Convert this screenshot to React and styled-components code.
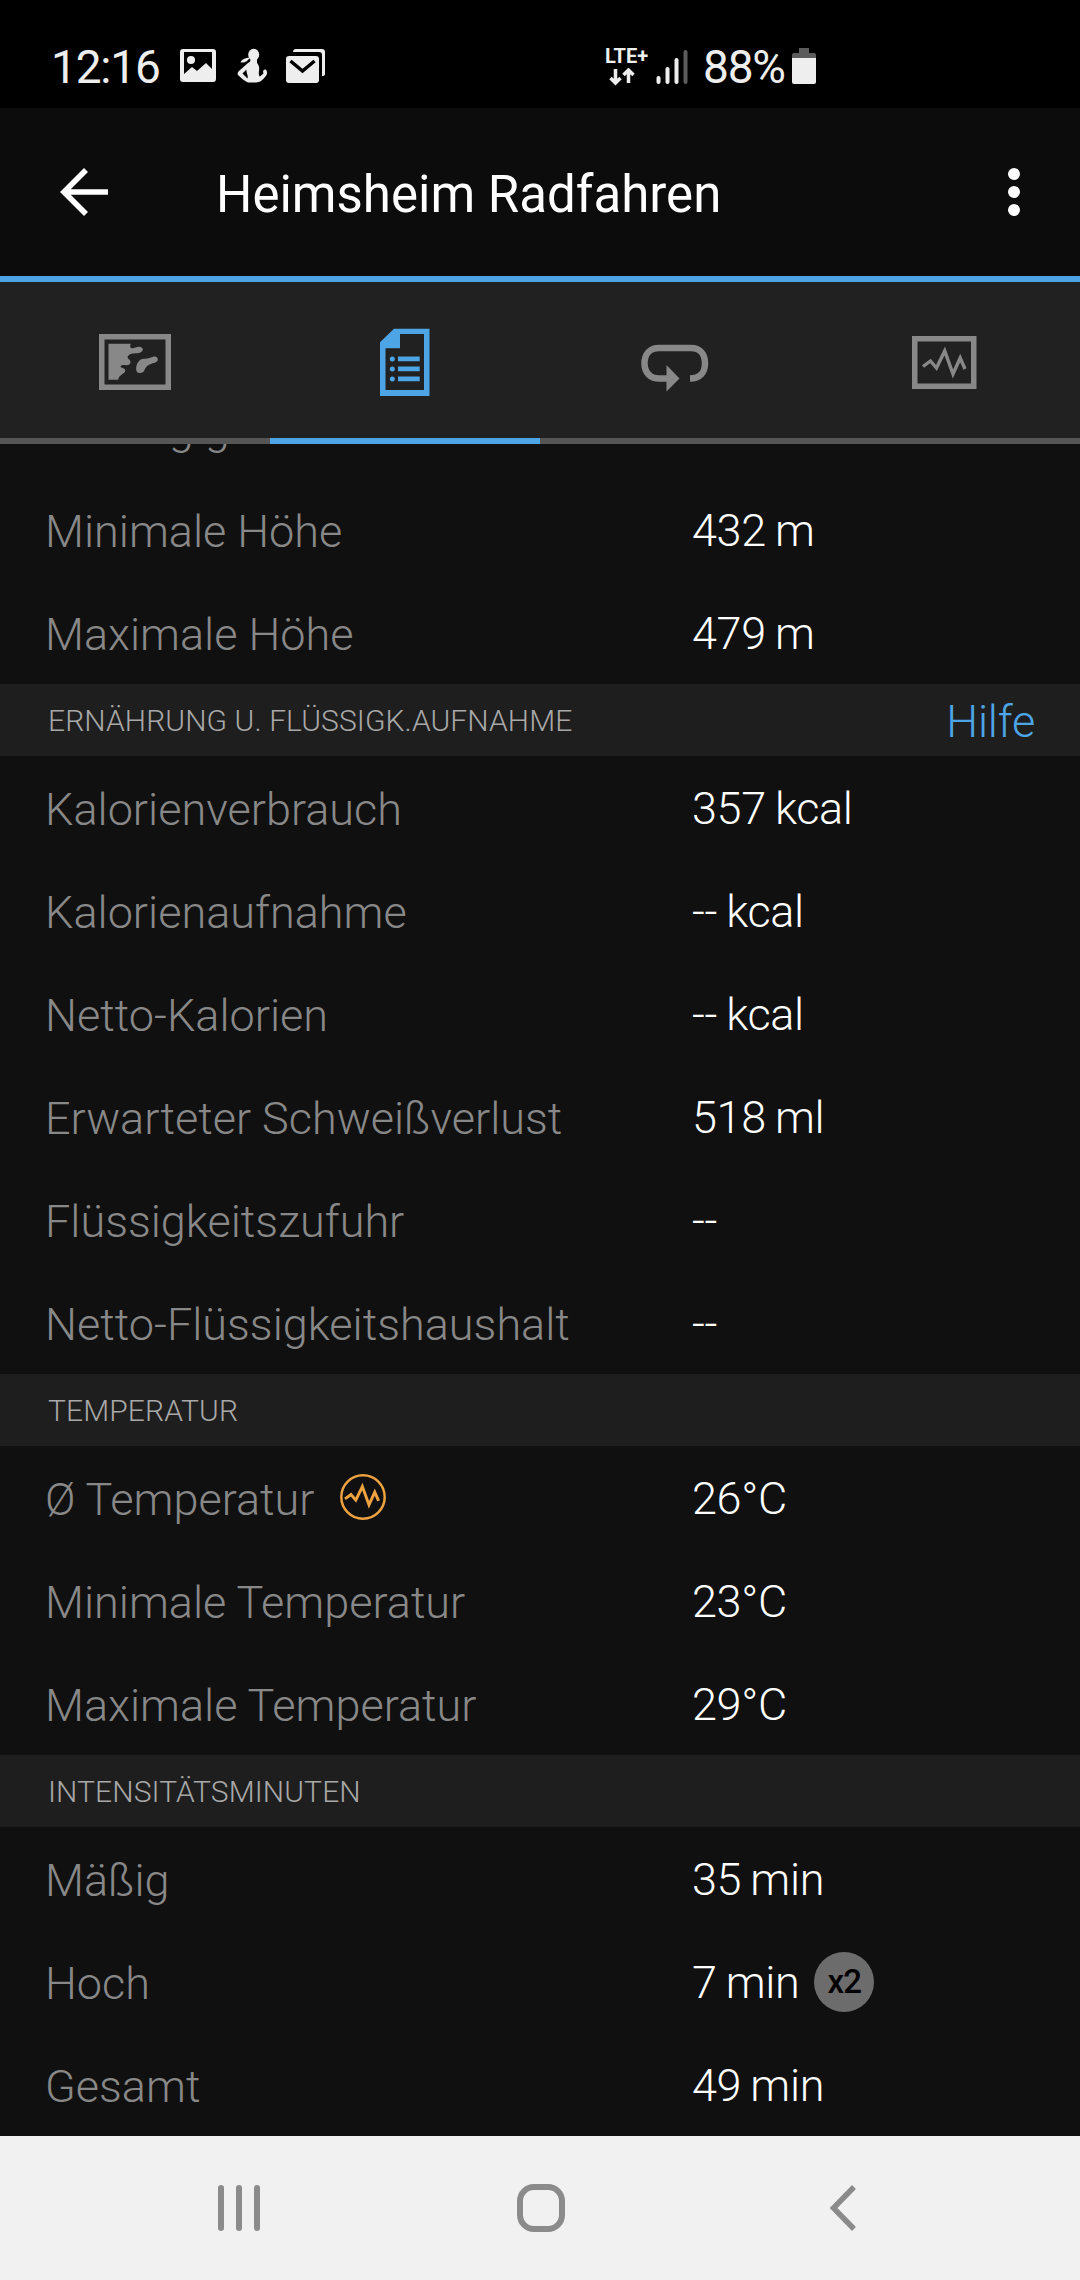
import styled, { createGlobalStyle } from "styled-components";

const GlobalStyle = createGlobalStyle`
  * {
    box-sizing: border-box;
  }

  body {
    margin: 0;
    background: #101010;
    font-family: Roboto, "Noto Sans", sans-serif;
  }
`;

const Screen = styled.div`
  width: 1080px;
  height: 2280px;
  display: flex;
  flex-direction: column;
  background: #101010;
  overflow: hidden;
`;

const StatusBar = styled.div`
  flex: none;
  height: 108px;
  display: flex;
  align-items: flex-start;
  justify-content: space-between;
  padding: 43px 264px 0 51px;
  background: #000000;
  color: #eeeeee;
`;

const StatusGroup = styled.div`
  display: flex;
  align-items: flex-start;
`;

const StatusText = styled.span`
  width: ${({ $width }) => $width}px;
  margin-left: ${({ $gap }) => $gap || 0}px;
  font-size: 46px;
  line-height: 48px;
  letter-spacing: -1.2px;
  white-space: nowrap;
`;

const StatusIcon = styled.svg`
  display: block;
  flex: none;
  margin-left: ${({ $gap }) => $gap || 0}px;
`;

const Network = styled.div`
  width: 46px;
  display: flex;
  flex-direction: column;
  gap: 2px;
  padding-top: 3px;
  font-size: 20px;
  font-weight: 700;
  line-height: 20px;
`;

const AppBar = styled.header`
  flex: none;
  height: 174px;
  display: flex;
  align-items: center;
  padding: 0 54px 0 60px;
  background: #0c0c0c;
  border-bottom: 6px solid #4ea5e6;
`;

const Title = styled.h1`
  flex: 1;
  margin: 4px 0 0 108px;
  font-size: 51px;
  font-weight: 400;
  color: #ffffff;
`;

const Tabs = styled.nav`
  flex: none;
  height: 162px;
  display: flex;
`;

const Tab = styled.button`
  flex: 1;
  display: flex;
  align-items: flex-start;
  justify-content: center;
  padding: ${({ $top }) => $top}px 0 0;
  border: 0;
  border-bottom: 6px solid ${({ $active }) => ($active ? "#4ea5e6" : "#555555")};
  background: #212121;
  color: ${({ $active }) => ($active ? "#4ea5e6" : "#888888")};

  svg {
    display: block;
  }
`;

const Content = styled.main`
  flex: 1;
  min-height: 0;
  display: flex;
  flex-direction: column;
  justify-content: flex-end;
  overflow: hidden;
`;

const Row = styled.div`
  flex: none;
  height: 103px;
  display: grid;
  grid-template-columns: 647px 1fr;
  align-items: center;
  padding-left: 45px;
  font-size: 45px;
  font-weight: 300;
  line-height: 54px;
`;

const Label = styled.span`
  display: flex;
  align-items: center;
  gap: 26px;
  padding-top: 5px;
  color: #888888;

  svg {
    margin-top: -6px;
  }
`;

const Value = styled.span`
  display: flex;
  align-items: center;
  gap: 15px;
  padding-top: 2px;
  color: #ffffff;
  letter-spacing: -0.35px;
  word-spacing: -1.5px;
`;

const SectionHeader = styled.h2`
  flex: none;
  height: 72px;
  display: flex;
  align-items: center;
  justify-content: space-between;
  margin: 0;
  padding: 0 45px 0 48px;
  background: #1e1e1e;
  color: #a8a8a8;
  font-size: 30px;
  font-weight: 300;
  letter-spacing: 0.1px;
  text-transform: uppercase;
`;

const HelpLink = styled.a`
  margin-top: 2px;
  color: #4ea5e6;
  font-size: 45px;
  letter-spacing: -0.2px;
  text-transform: none;
`;

const Multiplier = styled.span`
  width: 60px;
  height: 60px;
  display: flex;
  align-items: center;
  justify-content: center;
  margin-top: -2px;
  border-radius: 50%;
  background: #6c6c6c;
  color: #000000;
  font-size: 33px;
  font-weight: 500;
  letter-spacing: -0.7px;
`;

const NavBar = styled.footer`
  flex: none;
  height: 144px;
  display: grid;
  grid-template-columns: repeat(3, 302px);
  align-items: center;
  justify-items: center;
  padding-left: 88px;
  background: #f1f1f1;
`;

const Pulse = ({ width }) => (
  <polyline
    points="0,20.500 7.500,15 13.500,22 21.700,5 30,28 37.200,12 42,23"
    fill="none"
    stroke="currentColor"
    strokeWidth={width}
  />
);

const MapIcon = () => (
  <svg width="72" height="56" viewBox="0 0 72 56" fill="currentColor">
    <path fillRule="evenodd" d="M0 0H72V56H0ZM5.500 5.500V50.500H66.500V5.500Z" />
    <path d="M9.500 9.700H32C30.500 12 31 14.500 34 14.200C36.500 13.800 37 13 40 12.800C44.500 13 45 17 41.500 18.500C37 20 33 18.500 30 21C26 24.500 31.500 24.500 31.500 28C31.500 31.500 28 31.300 25 31C21.500 31 20 33 23.500 34C28 35 26.500 38.500 23.500 40C20.500 42 19.500 43.500 19.200 45.700H9.500Z" />
    <path d="M54 22.700C59.500 21.500 60.500 27.500 56 28.700C50 30 47 32 45.500 36C44.500 40 38 40 37.300 36.500C36.500 31 39.500 26 43 25C47 24.500 50 24.500 54 22.700Z" />
  </svg>
);

const DetailsIcon = () => (
  <svg width="50" height="68" viewBox="0 0 50 68" fill="currentColor">
    <path fillRule="evenodd" d="M14 .7H49.500V68H0V14.300ZM20 6V20.300H5.500V62H44V6Z" />
    <circle cx="12.300" cy="31" r="2.500" />
    <circle cx="12.300" cy="41" r="2.500" />
    <circle cx="12.300" cy="51" r="2.500" />
    <path d="M18 28.500H39.700V33.300H18ZM18 38.500H39.700V43.300H18ZM18 48.500H39.700V53.300H18Z" />
  </svg>
);

const LapsIcon = () => (
  <svg width="68" height="48" viewBox="0 0 68 48">
    <path
      d="M49 34.500C59 34.500 64 28 64 19.500C64 10 59 4 50 4H18C9 4 3.500 10 3.500 19.500C3.500 28 9 34.500 18 34.500H28"
      fill="none"
      stroke="currentColor"
      strokeWidth="6.500"
    />
    <path d="M25.500 21L38.500 34.500L25.500 47.500Z" fill="currentColor" />
  </svg>
);

const ChartIcon = () => (
  <svg width="66" height="54" viewBox="0 0 66 54">
    <rect x="2.750" y="2.750" width="59" height="47.500" fill="none" stroke="currentColor" strokeWidth="5.500" />
    <g transform="translate(11 10)">
      <Pulse width={3.4} />
    </g>
  </svg>
);

const TemperatureChart = () => (
  <svg width="46" height="46" viewBox="0 0 46 46" color="#eda13f">
    <circle cx="23" cy="23" r="21.700" fill="none" stroke="currentColor" strokeWidth="2.500" />
    <g transform="translate(5 8.500) scale(.8)">
      <Pulse width={3.7} />
    </g>
  </svg>
);

const DataRow = ({ label, value, chart, multiplier }) => (
  <Row>
    <Label>
      {label}
      {chart && <TemperatureChart />}
    </Label>
    <Value>
      {value}
      {multiplier && <Multiplier>{multiplier}</Multiplier>}
    </Value>
  </Row>
);

const tabs = [
  { id: "map", icon: <MapIcon />, top: 52 },
  { id: "details", icon: <DetailsIcon />, top: 46, active: true },
  { id: "laps", icon: <LapsIcon />, top: 62 },
  { id: "charts", icon: <ChartIcon />, top: 54 },
];

const sections = [
  {
    id: "elevation",
    rows: [
      { label: "Abstieg gesamt", value: "" },
      { label: "Minimale Höhe", value: "432 m" },
      { label: "Maximale Höhe", value: "479 m" },
    ],
  },
  {
    id: "nutrition",
    title: "Ernährung u. Flüssigk.aufnahme",
    help: "Hilfe",
    rows: [
      { label: "Kalorienverbrauch", value: "357 kcal" },
      { label: "Kalorienaufnahme", value: "-- kcal" },
      { label: "Netto-Kalorien", value: "-- kcal" },
      { label: "Erwarteter Schweißverlust", value: "518 ml" },
      { label: "Flüssigkeitszufuhr", value: "--" },
      { label: "Netto-Flüssigkeitshaushalt", value: "--" },
    ],
  },
  {
    id: "temperature",
    title: "Temperatur",
    rows: [
      { label: "Ø Temperatur", value: "26°C", chart: true },
      { label: "Minimale Temperatur", value: "23°C" },
      { label: "Maximale Temperatur", value: "29°C" },
    ],
  },
  {
    id: "intensity",
    title: "Intensitätsminuten",
    rows: [
      { label: "Mäßig", value: "35 min" },
      { label: "Hoch", value: "7 min", multiplier: "x2" },
      { label: "Gesamt", value: "49 min" },
    ],
  },
];

const Section = ({ title, help, rows }) => (
  <>
    {title && (
      <SectionHeader>
        {title}
        {help && <HelpLink>{help}</HelpLink>}
      </SectionHeader>
    )}
    {rows.map((row) => (
      <DataRow key={row.label} {...row} />
    ))}
  </>
);

const App = () => {
  return (
    <Screen>
      <GlobalStyle />
      <StatusBar>
        <StatusGroup>
          <StatusText $width={129}>12:16</StatusText>
          <StatusIcon width="36" height="48" viewBox="0 0 36 48" fill="#eeeeee">
            <path fillRule="evenodd" d="M3 6H33Q36 6 36 9V36Q36 39 33 39H3Q0 39 0 36V9Q0 6 3 6ZM4 9V31L12 24L17 28L26 20L32 26V9Z" />
            <circle cx="11" cy="17" r="4" />
          </StatusIcon>
          {/* runner with ponytail */}
          <StatusIcon $gap={21} width="31" height="48" viewBox="0 0 31 48" fill="#eeeeee">
            <ellipse cx="16.700" cy="11.800" rx="5.500" ry="6" />
            <path d="M3.500 19.500C5 16 8 15 13 14.500C11 18 8 20 3.500 19.500Z" />
            <path
              fillRule="evenodd"
              d="M13.500 16H20V20C22 22 22.500 25 22 28C21.500 31 22 33 23 33.500L26.500 30.500C25.500 28 26.500 26 29 26.500C30.500 29 30.500 31 28.500 33.500C26 36.500 23 39.500 19 39.500H11C8 38.500 4 35 1 32C0 30.500 1 29 2.500 27.500L11 20C13 19 13.500 18 13.500 16ZM9.500 26.500L5.500 30.500L10.500 35.500C11.500 32 9 30 9.500 26.500Z"
            />
          </StatusIcon>
          <StatusIcon $gap={18} width="40" height="48" viewBox="0 0 40 48" fill="#eeeeee">
            <path d="M7 9Q7 6 10 6H36Q39 6 39 9V31Q39 33 36 33V12Q36 9 33 9Z" />
            <rect y="13" width="33" height="27" rx="3" />
            <path d="M4.500 18L16.500 28L28.500 18" fill="none" stroke="#000000" strokeWidth="3.500" />
          </StatusIcon>
        </StatusGroup>
        <StatusGroup>
          <Network>
            LTE+
            <svg width="30" height="18" viewBox="0 0 30 18" stroke="#eeeeee" strokeWidth="3.500" fill="none">
              <path d="M10.500 1V15M5.500 10L10.500 15L15.500 10M23.500 15V2M18.500 7L23.500 2L28.500 7" />
            </svg>
          </Network>
          <StatusIcon $gap={5} width="32" height="48" viewBox="0 0 32 48" fill="#eeeeee">
            <rect x=".5" y="33" width="4" height="8" rx="2" />
            <rect x="9.500" y="24" width="4" height="17" rx="2" />
            <rect x="18.500" y="15" width="4" height="26" rx="2" />
            <rect x="27.500" y="7" width="4" height="34" rx="2" fill="#5c5c5c" />
          </StatusIcon>
          <StatusText $width={89} $gap={15}>
            88%
          </StatusText>
          <StatusIcon width="24" height="48" viewBox="0 0 24 48" fill="#eeeeee">
            <path d="M7 5H17V10H22Q24 10 24 12V16H0V12Q0 10 2 10H7Z" fill="#5c5c5c" />
            <path d="M0 15H24V39Q24 41 22 41H2Q0 41 0 39Z" />
          </StatusIcon>
        </StatusGroup>
      </StatusBar>
      <AppBar>
        <svg width="48" height="48" viewBox="0 0 48 48" fill="none" stroke="#ffffff" strokeWidth="5.600">
          <path d="M26 2L4 24L26 46M4 24H48" />
        </svg>
        <Title>Heimsheim Radfahren</Title>
        <svg width="24" height="48" viewBox="0 0 24 48" fill="#ffffff">
          <circle cx="12" cy="6" r="6" />
          <circle cx="12" cy="24" r="6" />
          <circle cx="12" cy="42" r="6" />
        </svg>
      </AppBar>
      <Tabs>
        {tabs.map(({ id, icon, top, active }) => (
          <Tab key={id} aria-label={id} $top={top} $active={active}>
            {icon}
          </Tab>
        ))}
      </Tabs>
      <Content>
        {sections.map((section) => (
          <Section key={section.id} {...section} />
        ))}
      </Content>
      <NavBar>
        <svg width="42" height="46" viewBox="0 0 42 46" fill="#8b8b8b">
          <rect x="0" y="0" width="6" height="46" rx="3" />
          <rect x="18" y="0" width="6" height="46" rx="3" />
          <rect x="36" y="0" width="6" height="46" rx="3" />
        </svg>
        <svg width="48" height="48" viewBox="0 0 48 48" fill="none" stroke="#8b8b8b" strokeWidth="6">
          <rect x="3" y="3" width="42" height="42" rx="14" />
        </svg>
        <svg width="28" height="48" viewBox="0 0 28 48" fill="none" stroke="#8b8b8b" strokeWidth="5.500">
          <path d="M25 3L4.500 24L25 45" />
        </svg>
      </NavBar>
    </Screen>
  );
};

export default App;
